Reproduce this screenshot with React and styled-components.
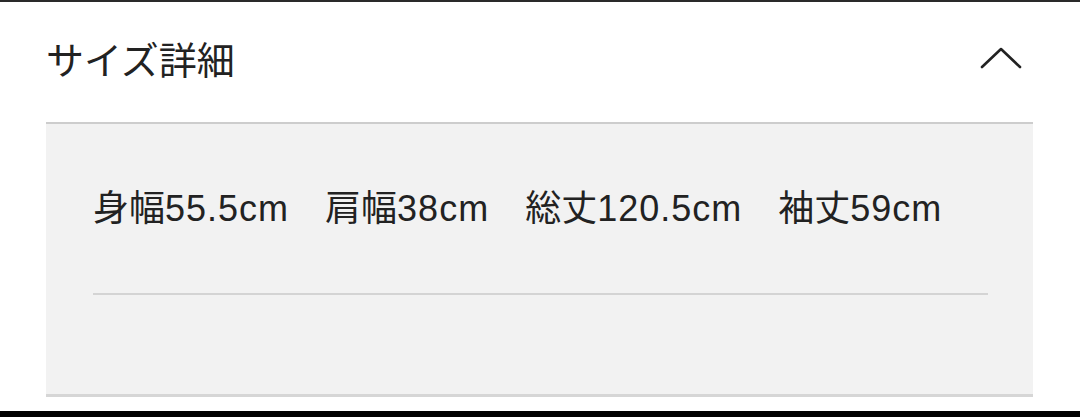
import React from 'react';
import styled, { createGlobalStyle } from 'styled-components';

const GlobalStyle = createGlobalStyle`
    body {
        margin: 0;
        background: #fff;
        font-family: 'Liberation Sans', 'Noto Sans CJK JP', sans-serif;
        color: #222;
    }
`;

const sizes = [
    { label: '身幅', value: '55.5cm' },
    { label: '肩幅', value: '38cm' },
    { label: '総丈', value: '120.5cm' },
    { label: '袖丈', value: '59cm' },
];

const Chevron = ({ open }) => (
    <svg width="42" height="24" viewBox="0 0 42 24" fill="none">
        <path
            d={open ? 'M2 21 L21 3 L40 21' : 'M2 3 L21 21 L40 3'}
            stroke="#222"
            strokeWidth="2.6"
            strokeLinecap="round"
            strokeLinejoin="round"
        />
    </svg>
);

export default function App() {
    return (
        <>
            <GlobalStyle />
            <Accordion>
                <Header>
                    <Title>サイズ詳細</Title>
                    <Chevron open />
                </Header>
                <Panel>
                    <SizeRow>
                        {sizes.map((s) => (
                            <SizeItem key={s.label}>
                                {s.label}
                                <Value>{s.value}</Value>
                            </SizeItem>
                        ))}
                    </SizeRow>
                    <Divider />
                </Panel>
            </Accordion>
        </>
    );
}

const Accordion = styled.section`
    width: 1080px;
    height: 417px;
    box-sizing: border-box;
    border-top: 2px solid #2a2a2a;
    border-bottom: 6px solid #000;
    display: flex;
    flex-direction: column;
`;

const Header = styled.div`
    height: 112px;
    padding: 0 58px 8px 46px;
    display: flex;
    align-items: center;
    justify-content: space-between;
`;

const Title = styled.h2`
    margin: 0;
    font-size: 38px;
    font-weight: 400;
    line-height: 1;
    font-family: 'Noto Sans CJK JP', sans-serif;
`;

const Panel = styled.div`
    margin: 0 47px 0 46px;
    height: 275px;
    box-sizing: border-box;
    background: #f2f2f2;
    border-top: 2px solid #cdcdcd;
    border-bottom: 3px solid #d6d6d6;
    padding: 65px 45px 0 47px;
`;

const SizeRow = styled.div`
    display: flex;
    gap: 36px;
    line-height: 40px;
`;

const SizeItem = styled.span`
    font-size: 36px;
    color: #222;
    white-space: nowrap;
`;

const Value = styled.span`
    letter-spacing: 1px;
`;

const Divider = styled.hr`
    margin: 64px 0 0;
    border: none;
    height: 2px;
    background: #d4d4d4;
`;
